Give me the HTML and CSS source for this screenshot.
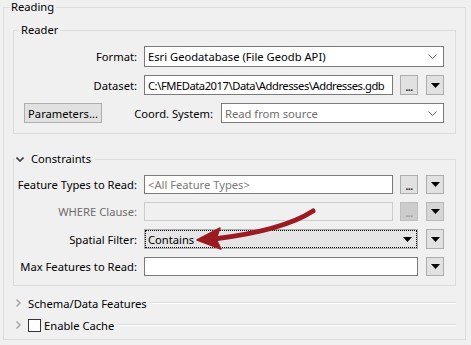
FILE: index.html
```html
<!DOCTYPE html>
<html>
<head>
<meta charset="utf-8">
<link rel="stylesheet" href="styles.css">
</head>
<body>
<fieldset class="group outer">
  <legend class="legend outer-legend">Reading</legend>

  <fieldset class="group reader">
    <legend class="legend">Reader</legend>
    <div class="form reader-form">
      <label class="lbl">Format:</label>
      <div class="combo span3"><span class="val">Esri Geodatabase (File Geodb API)</span><svg class="chev" width="9" height="5" viewBox="0 0 9 5"><path d="M0.5 0.5 L4.5 4.5 L8.5 0.5" fill="none" stroke="#606060" stroke-width="1"/></svg></div>

      <label class="lbl">Dataset:</label>
      <div class="input"><span class="val path">C:\FMEData2017\Data\Addresses\Addresses.gdb</span></div>
      <div class="btn dots">...</div>
      <div class="btn arrow"><svg width="9" height="5" viewBox="0 0 9 5"><path d="M0 0 H9 L4.5 5 Z" fill="#000"/></svg></div>

      <div class="params-row span4">
        <div class="btn params">Parameters...</div>
        <label class="lbl coord-lbl">Coord. System:</label>
        <div class="combo coord"><span class="val muted">Read from source</span><svg class="chev" width="9" height="5" viewBox="0 0 9 5"><path d="M0.5 0.5 L4.5 4.5 L8.5 0.5" fill="none" stroke="#606060" stroke-width="1"/></svg></div>
      </div>
    </div>
  </fieldset>

  <fieldset class="group constraints">
    <legend class="legend section-legend"><svg class="exp" width="8" height="5" viewBox="0 0 8 5"><path d="M0.5 0.5 L4 4 L7.5 0.5" fill="none" stroke="#3c3c3c" stroke-width="1.6"/></svg>Constraints</legend>
    <div class="form constraints-form">
      <label class="lbl">Feature Types to Read:</label>
      <div class="input"><span class="val placeholder">&lt;All Feature Types&gt;</span></div>
      <div class="btn dots">...</div>
      <div class="btn arrow"><svg width="9" height="5" viewBox="0 0 9 5"><path d="M0 0 H9 L4.5 5 Z" fill="#000"/></svg></div>

      <label class="lbl disabled">WHERE Clause:</label>
      <div class="input is-disabled"></div>
      <div class="btn dots is-disabled">...</div>
      <div class="btn arrow is-dim"><svg width="9" height="5" viewBox="0 0 9 5"><path d="M0 0 H9 L4.5 5 Z" fill="#000"/></svg></div>

      <label class="lbl">Spatial Filter:</label>
      <div class="combo focus span2"><span class="val">Contains</span><svg class="tri" width="9" height="5" viewBox="0 0 9 5"><path d="M0 0 H9 L4.5 5 Z" fill="#000"/></svg></div>
      <div class="btn arrow"><svg width="9" height="5" viewBox="0 0 9 5"><path d="M0 0 H9 L4.5 5 Z" fill="#000"/></svg></div>

      <label class="lbl">Max Features to Read:</label>
      <div class="input span2"></div>
      <div class="btn arrow"><svg width="9" height="5" viewBox="0 0 9 5"><path d="M0 0 H9 L4.5 5 Z" fill="#000"/></svg></div>
    </div>
  </fieldset>

  <div class="collapsed first">
    <svg class="col-chev" width="5" height="8" viewBox="0 0 5 8"><path d="M0.5 0.5 L4 4 L0.5 7.5" fill="none" stroke="#a6a6a6" stroke-width="1.5"/></svg>
    <span class="sec-title">Schema/Data Features</span>
    <span class="rule"></span>
  </div>
  <div class="collapsed">
    <svg class="col-chev" width="5" height="8" viewBox="0 0 5 8"><path d="M0.5 0.5 L4 4 L0.5 7.5" fill="none" stroke="#a6a6a6" stroke-width="1.5"/></svg>
    <span class="checkbox"></span>
    <span class="sec-title">Enable Cache</span>
    <span class="rule"></span>
  </div>
</fieldset>

<svg class="callout" width="471" height="345" viewBox="0 0 471 345">
  <path d="M313 211 C 290 226, 255 234, 214 239" fill="none" stroke="#9c1a22" stroke-width="5" stroke-linecap="round"/>
  <path d="M197 240 L220 228 L216 239 L221 249 Z" fill="#9c1a22" stroke="#9c1a22" stroke-width="1.5" stroke-linejoin="round"/>
</svg>
</body>
</html>
```

FILE: styles.css
```css
* { box-sizing: border-box; }
html, body { margin: 0; padding: 0; }
body {
  width: 471px;
  height: 345px;
  overflow: hidden;
  position: relative;
  background: #f0f0f0;
  font-family: "Segoe UI", "Noto Sans", sans-serif;
  font-size: 11.2px;
  color: #000;
}

.group {
  margin: 0;
  padding: 0;
  min-width: 0;
  border: 1px solid #dcdcdc;
}
.legend {
  padding: 0 2px;
  margin-left: 5px;
  line-height: 14px;
  height: 14px;
  white-space: nowrap;
}
.outer {
  margin: 0 5px 0 3px;
  height: 340px;
}
.outer-legend { margin-left: 5px; }

.reader {
  margin: 9px 9px 0 9px;
  padding: 9px 11px 10px 0;
}
.constraints {
  margin: 18px 9px 0 9px;
  padding: 9px 11px 9px 0;
}
.section-legend {
  margin-left: 0;
  padding: 0 4px 0 2px;
  display: flex;
  align-items: center;
}
.exp { margin-right: 7px; }

.form {
  display: grid;
  grid-template-columns: 123px 249px 18px 19px;
  column-gap: 7px;
  align-items: center;
}
.form > .btn.arrow { justify-self: end; width: 18px; }
.reader-form { grid-template-rows: 21px 20px 20px; row-gap: 8px; }
.constraints-form { grid-template-rows: 19px 19px 20px 19px; row-gap: 8px; }

.span2 { grid-column: span 2; }
.span3 { grid-column: span 3; }
.span4 { grid-column: span 4; }

.lbl {
  text-align: right;
  white-space: nowrap;
}
.lbl.disabled { color: #6d6d6d; }

.input, .combo {
  height: 100%;
  min-width: 0;
  background: #fff;
  border: 1px solid #7a7a7a;
  display: flex;
  align-items: center;
  padding: 0 3px;
  white-space: nowrap;
  overflow: hidden;
}
.combo { justify-content: space-between; padding-right: 6px; }
.combo .chev { flex: none; }
.input.is-disabled {
  background: #f0f0f0;
  border-color: #cccccc;
}
.val { overflow: hidden; }
.path { letter-spacing: -0.45px; overflow: visible; }
.muted { color: #6d6d6d; }
.placeholder { color: #7a7a7a; }

.combo.focus {
  background: #e5e5e5;
  border: 1px solid #adadad;
  outline: 1px dotted #000;
  outline-offset: -2px;
  padding-right: 5px;
}

.btn {
  height: 100%;
  background: #e1e1e1;
  border: 1px solid #adadad;
  display: flex;
  align-items: center;
  justify-content: center;
  white-space: nowrap;
}
.btn.dots {
  font-weight: bold;
  font-size: 10px;
  letter-spacing: -0.5px;
  padding-top: 3px;
  color: #1a1a1a;
}
.btn.dots.is-disabled {
  background: #cccccc;
  border-color: #bfbfbf;
  color: #9a9a9a;
}
.btn.arrow.is-dim { background: #d6d6d6; border-color: #b8b8b8; }

.params-row {
  display: flex;
  align-items: center;
  height: 20px;
}
.btn.params {
  width: 78px;
  margin-left: 10px;
  padding: 0 4px;
}
.coord-lbl { margin-left: auto; }
.combo.coord {
  width: 223px;
  margin-left: 8px;
}

.collapsed {
  display: flex;
  align-items: center;
  height: 16px;
  margin: 0 9px 0 12px;
}
.collapsed.first { margin-top: 9px; }
.collapsed + .collapsed { margin-top: 6px; }
.col-chev { flex: none; margin-right: 7px; }
.checkbox {
  width: 13px;
  height: 13px;
  border: 1px solid #333;
  background: #fff;
  margin-right: 3px;
  flex: none;
}
.sec-title { white-space: nowrap; padding-right: 3px; }
.rule {
  flex: 1;
  height: 2px;
  border-top: 1px solid #dcdcdc;
  border-bottom: 1px solid #fff;
}

.callout {
  position: absolute;
  left: 0;
  top: 0;
  pointer-events: none;
}
```
